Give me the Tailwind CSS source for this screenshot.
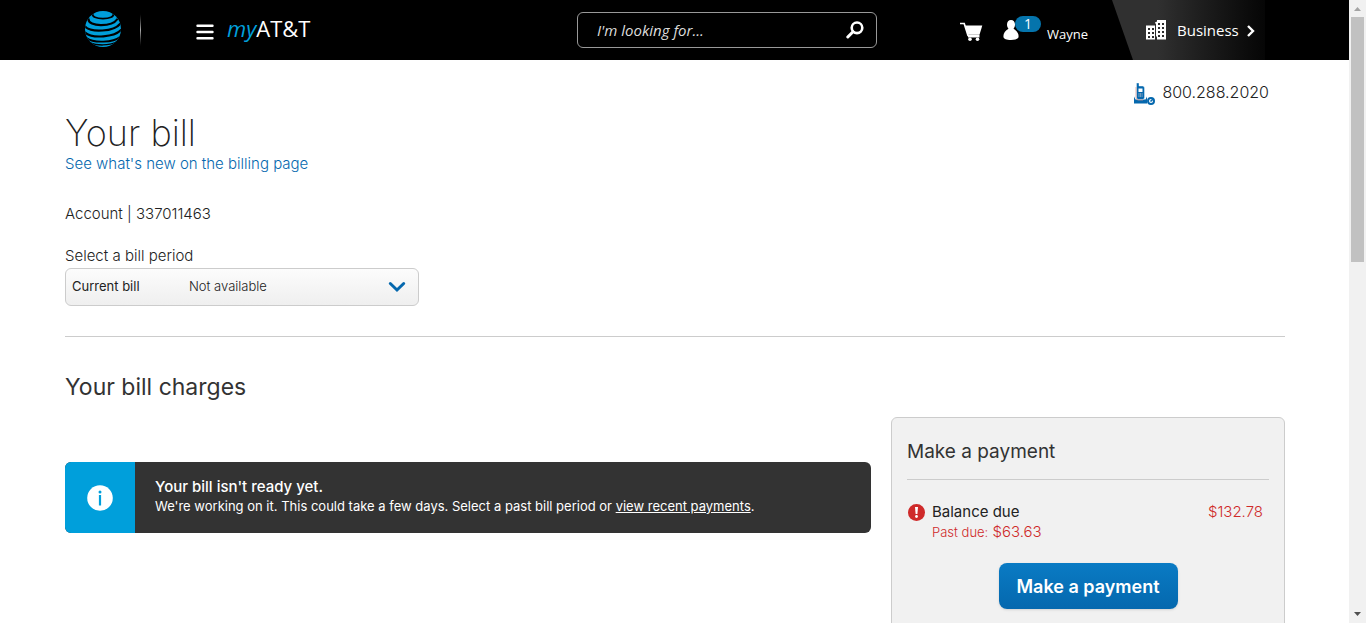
<!DOCTYPE html>
<html lang="en">
<head>
<meta charset="utf-8">
<meta name="viewport" content="width=device-width, initial-scale=1">
<title>Your bill</title>
<script src="https://cdn.jsdelivr.net/npm/@tailwindcss/browser@4"></script>
</head>
<body class="flex h-screen overflow-hidden bg-white font-['Inter','Liberation_Sans',sans-serif] text-[#222]">
<div class="h-full min-w-0 flex-1 overflow-hidden">
  <header class="flex h-15 items-center bg-black pl-[85px] pr-[84px] font-['Open_Sans','Noto_Sans',sans-serif] text-white">
    <div class="flex flex-1 items-center">
      <a href="#" aria-label="Home">
        <svg class="mb-0.5 block size-9" viewBox="0 0 36 36">
          <defs><clipPath id="g"><circle cx="18" cy="18" r="18"/></clipPath></defs>
          <g clip-path="url(#g)">
            <path d="M0 0h36v36H0z" fill="#009fdb"/>
            <g fill="none" stroke="#000" stroke-linecap="round">
              <path d="M8 2C4 9.500 32 9.500 28 2" stroke-width="1.800"/>
              <path d="M3.500 8C3 16 27 16 32 8.500" stroke-width="2.200"/>
              <path d="M0 15.500c6 6.500 29 5 35-2.500" stroke-width="2.200"/>
              <path d="M0 21.500c7 6.500 30 4.500 36-2.500" stroke-width="2.200"/>
              <path d="M1.500 27c7 5.500 27 4.500 33.500-1" stroke-width="1.900"/>
              <path d="M5 31.800c7 3 19 3 26-.6" stroke-width="1.300"/>
            </g>
          </g>
        </svg>
      </a>
      <div class="ml-[19px] h-9 w-px bg-linear-to-b from-black via-[#aaa] to-black"></div>
      <button aria-label="Menu" class="ml-[55px]"><svg class="mt-1 block h-4 w-[18px]" viewBox="0 0 18 16" stroke="#fff" stroke-width="2.400" stroke-linecap="round"><path d="M1.500 1.800h15M1.500 8h15M1.500 14.200h15"/></svg></button>
      <a href="#" class="ml-[13px] flex items-baseline pb-1 text-[22px] leading-8"><span class="italic text-[#009fdb]">my</span><span>AT&amp;T</span></a>
    </div>
    <form class="flex h-9 w-75 items-center rounded-[6px] border border-[#999] pl-[19px] pr-3">
      <input type="search" aria-label="Search" placeholder="I'm looking for..." class="min-w-0 flex-1 bg-transparent text-[15px] italic outline-none placeholder:text-[#ddd]">
      <button type="button" aria-label="Search"><svg class="block size-[18px]" viewBox="0 0 18 18" fill="none" stroke="#fff"><circle cx="11" cy="6.800" r="5.300" stroke-width="2.600"/><path d="M7 10.700L1.800 16" stroke-width="3" stroke-linecap="round"/></svg></button>
    </form>
    <div class="flex h-full w-[388px] items-center justify-end">
      <a href="#" aria-label="Cart"><svg class="mt-1 block h-5 w-6" viewBox="0 0 24 20" fill="#fff"><path d="M1 1.500h4.200L9 13.500h11" fill="none" stroke="#fff" stroke-width="1.700"/><path d="M6 3.500h17.300l-2.800 9.200H8.800z"/><path d="M9 13h11.500v2.500H9z"/><circle cx="11" cy="17.300" r="1.800"/><circle cx="18.500" cy="17.300" r="1.800"/></svg></a>
      <a href="#" class="ml-5 mt-1 flex items-start text-[13px]">
        <svg class="mt-1 h-5 w-4" viewBox="0 0 16 20" fill="#fff"><path d="M8 0c2.500 0 4 2 4 4.500 0 2-.8 3.500-1.500 4.200C14 11 16 13.500 15.500 17c-.2 1.800-3 3-7.500 3S.7 18.800.5 17C0 13.500 2 11 5.500 8.700 4.800 8 4 6.500 4 4.500 4 2 5.500 0 8 0z"/></svg>
        <span class="-ml-1 h-4 w-[26px] rounded-full bg-[#0574ac] text-center text-[14px] leading-4">1</span>
        <span class="ml-1.5 mt-1 leading-7">Wayne</span>
      </a>
      <a href="#" class="ml-6 flex h-full w-[153px] items-center bg-linear-to-r from-[#303030] from-30% to-[#060606] pl-[34px] text-[15px] [clip-path:polygon(0_0,100%_0,100%_100%,21px_100%)]">
        <svg class="h-5 w-5" viewBox="0 0 20 20"><path d="M0 5.500h9V2.500l2-1V0h9v19.500h-9v-3H9v3H0z" fill="#fff"/><path d="M9.500 3.500V19" stroke="#2c2c2c"/><path d="M2 8h2v2H2zm4 0h2v2H6zm-4 4h2v2H2zm4 0h2v2H6zm-4 4h2v2H2zm4 0h2v2H6zm6-13h2v2h-2zm4 0h2v2h-2zm-4 4h2v2h-2zm4 0h2v2h-2zm-4 4h2v2h-2zm4 0h2v2h-2zm0 4h2v2h-2zm-4 0h2v2h-2z" fill="#2c2c2c"/></svg>
        <span class="ml-[11px]">Business</span>
        <svg class="ml-2 mt-0.5 h-3 w-2" viewBox="0 0 8 12" fill="none" stroke="#fff" stroke-width="2.400"><path d="M1 1l5 5-5 5"/></svg>
      </a>
    </div>
  </header>

  <main class="pl-[65px] pr-16">
    <div class="flex items-center justify-end gap-1.5 pr-4 pt-[18px] text-[16px] font-light leading-6">
      <svg class="mt-1 h-6 w-6" viewBox="0 0 24 24"><path d="M2 14.500L3.500 17.500h10l1.500-3V21.500H2z" fill="#0568ae"/><path d="M4.500 1H7v3h3.500q2 0 2 2v9.500q0 2-2 2h-4q-2 0-2-2z" fill="#0568ae" stroke="#fff" stroke-width=".4"/><path d="M6.500 6.500h4V10h-4z" fill="#fff"/><path d="M6.500 12h4m-4 2h4" stroke="#f4d9d4" stroke-dasharray="1 .6"/><path d="M4 5v10.500q0 2 2 2.500h5" fill="none" stroke="#dc9990" stroke-width=".7"/><circle cx="19" cy="19" r="3" fill="none" stroke="#0568ae" stroke-width="2"/><path d="M18.500 19.500l3-3" stroke="#0568ae" stroke-width="1.600"/></svg>
      <span>800.288.2020</span>
    </div>
    <h1 class="mt-[5px] text-[36px] font-extralight leading-11">Your bill</h1>
    <a href="#" class="block text-[15px] font-light leading-[18px] text-[#0568ae]">See what's new on the billing page</a>
    <p class="mt-[31px] text-[15px] font-light leading-5">Account | 337011463</p>
    <label for="period" class="mt-[22px] block text-[15px] font-light leading-5">Select a bill period</label>
    <div class="mt-0.5 grid w-[354px] items-center rounded-[6px] border border-[#ccc] bg-linear-to-b from-[#fcfcfc] to-[#efefef] text-[13px]">
      <select id="period" class="col-start-1 row-start-1 h-9 w-full appearance-none bg-transparent pl-1.5 outline-none"><option>Current bill</option></select>
      <div class="pointer-events-none col-start-1 row-start-1 flex items-center justify-between pl-[123px] pr-3">
        <span class="font-light">Not available</span>
        <svg class="h-3 w-[18px]" viewBox="0 0 18 12" fill="none" stroke="#0568ae" stroke-width="3" stroke-linecap="round"><path d="M2.300 2.500L9 9l6.700-6.500"/></svg>
      </div>
    </div>
    <hr class="mt-[30px] border-[#ccc]">
    <h2 class="mt-[35px] text-[23px] leading-[30px] text-[#333]">Your bill charges</h2>
    <div class="mt-[15px] flex items-start gap-5">
      <section class="mt-[45px] flex h-[71px] min-w-0 flex-1 overflow-hidden rounded-[6px] bg-[#333] text-white">
        <div class="flex w-[70px] items-center justify-center bg-[#009fdb]">
          <svg class="size-[26px]" viewBox="0 0 26 26"><circle cx="13" cy="13" r="12.800" fill="#fff"/><circle cx="13" cy="7" r="1.500" fill="#009fdb"/><path d="M13 10v10.500" stroke="#009fdb" stroke-width="2.200"/></svg>
        </div>
        <div class="pl-5 pt-[15px]">
          <p class="text-[15px] font-medium leading-5">Your bill isn't ready yet.</p>
          <p class="text-[13px] leading-[19px]">We're working on it. This could take a few days. Select a past bill period or <a href="#" class="underline">view recent payments</a>.</p>
        </div>
      </section>
      <section class="h-75 w-[394px] rounded-[6px] border border-[#ccc] bg-[#f1f1f1] px-[15px]">
        <h3 class="border-b border-[#ccc] pb-3.5 pt-5 text-[19px] leading-[27px] text-[#333]">Make a payment</h3>
        <div class="mt-[22px] flex items-start pr-1.5 text-[15px] leading-5">
          <svg class="ml-[1px] mt-0.5 size-[17px]" viewBox="0 0 17 17"><circle cx="8.500" cy="8.500" r="8.500" fill="#cf2a2a"/><path d="M7 3h3l-.6 7H7.600z" fill="#fff"/><circle cx="8.500" cy="12.500" r="1.400" fill="#fff"/></svg>
          <div class="ml-[7px] flex-1">
            <p>Balance due</p>
            <p class="font-light text-[#cf2a2a]"><span class="text-[13px]">Past due:</span> $63.63</p>
          </div>
          <span class="font-light text-[#cf2a2a]">$132.78</span>
        </div>
        <button class="mx-auto mt-[21px] block h-[46px] w-[179px] rounded-[8px] bg-linear-to-b from-[#0a7bc4] to-[#0568ae] text-[18px] font-semibold text-white shadow-sm">Make a payment</button>
      </section>
    </div>
  </main>
</div>
<div class="flex h-full w-[17px] flex-col items-center justify-between bg-[#f1f1f1]" aria-hidden="true">
  <div class="flex flex-col items-center">
    <svg class="h-[17px] w-[17px]" viewBox="0 0 17 17"><path d="M5 11l3.500-4 3.500 4z" fill="#a3a3a3"/></svg>
    <div class="h-[245px] w-[13px] bg-[#c1c1c1]"></div>
  </div>
  <svg class="h-[17px] w-[17px]" viewBox="0 0 17 17"><path d="M5 6l3.500 4L12 6z" fill="#505050"/></svg>
</div>
</body>
</html>
